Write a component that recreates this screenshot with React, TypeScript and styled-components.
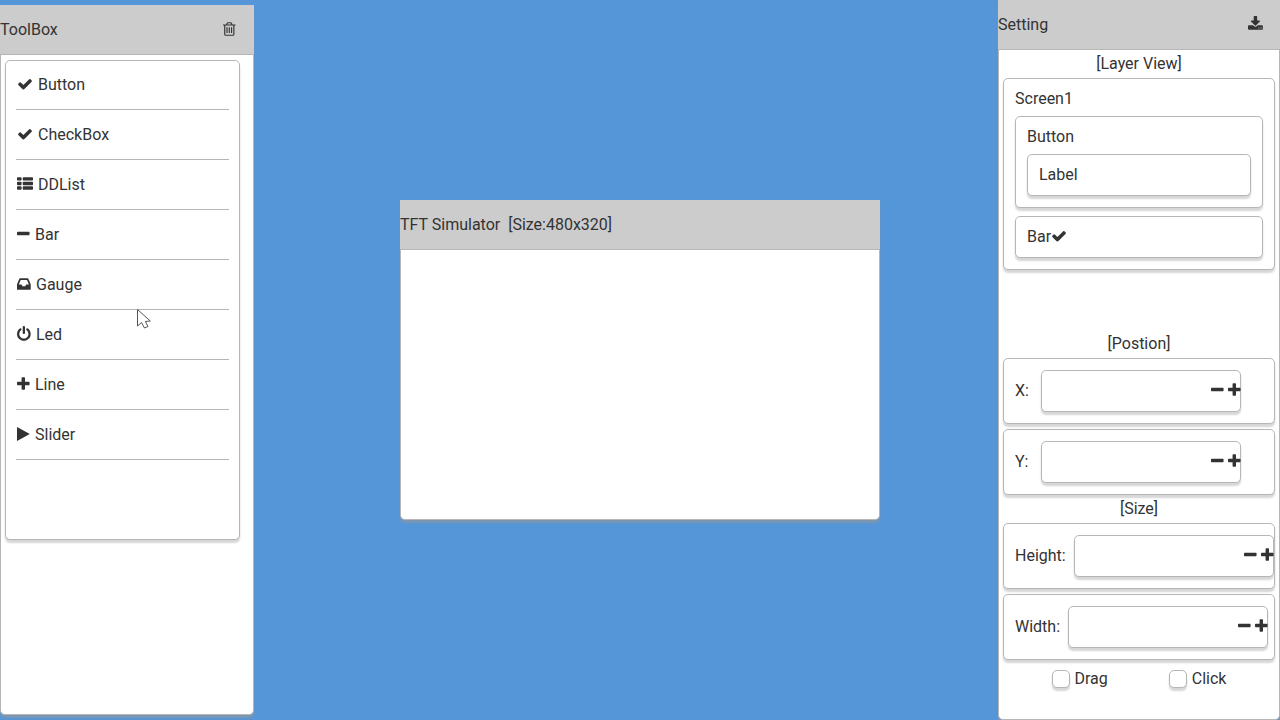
import React, { useId } from "react";
import styled, { createGlobalStyle } from "styled-components";

const GlobalStyle = createGlobalStyle`
  *, *::before, *::after { box-sizing: border-box; }
  body {
    margin: 0;
    background: #5596d8;
    color: #333;
    font: 16px/19px Roboto, "Liberation Sans", sans-serif;
  }
  button, input { font: inherit; color: inherit; }
`;

/* ---------- icons ---------- */

type IconName =
  | "check" | "list" | "minus" | "plus" | "inbox"
  | "power" | "play" | "trash" | "download";

/* x: left edge of the glyph on its 1792-unit grid, w: advance in pixels */
const glyphs: Record<IconName, { x: number; w: number; d: string }> = {
  check: {
    x: 0, w: 16,
    d: "M1671 566q0 40-28 68l-724 724-136 136q-28 28-68 28t-68-28l-136-136-362-362q-28-28-28-68t28-68l136-136q28-28 68-28t68 28l294 295 656-657q28-28 68-28t68 28l136 136q28 28 28 68z",
  },
  list: {
    x: 0, w: 16,
    d: "M512 1248v192q0 40-28 68t-68 28h-320q-40 0-68-28t-28-68v-192q0-40 28-68t68-28h320q40 0 68 28t28 68zm0-512v192q0 40-28 68t-68 28h-320q-40 0-68-28t-28-68v-192q0-40 28-68t68-28h320q40 0 68 28t28 68zm1280 512v192q0 40-28 68t-68 28h-960q-40 0-68-28t-28-68v-192q0-40 28-68t68-28h960q40 0 68 28t28 68zm-1280-1024v192q0 40-28 68t-68 28h-320q-40 0-68-28t-28-68v-192q0-40 28-68t68-28h320q40 0 68 28t28 68zm1280 512v192q0 40-28 68t-68 28h-960q-40 0-68-28t-28-68v-192q0-40 28-68t68-28h960q40 0 68 28t28 68zm0-512v192q0 40-28 68t-68 28h-960q-40 0-68-28t-28-68v-192q0-40 28-68t68-28h960q40 0 68 28t28 68z",
  },
  minus: {
    x: 192, w: 13,
    d: "M1600 736v192q0 40-28 68t-68 28h-1216q-40 0-68-28t-28-68v-192q0-40 28-68t68-28h1216q40 0 68 28t28 68z",
  },
  plus: {
    x: 192, w: 13,
    d: "M1600 736v192q0 40-28 68t-68 28h-416v416q0 40-28 68t-68 28h-192q-40 0-68-28t-28-68v-416h-416q-40 0-68-28t-28-68v-192q0-40 28-68t68-28h416v-416q0-40 28-68t68-28h192q40 0 68 28t28 68v416h416q40 0 68 28t28 68z",
  },
  inbox: {
    x: 128, w: 14,
    d: "M1151 960h316q-1-3-2.5-8.5t-2.5-7.5l-212-496h-708l-212 496q-1 3-2.5 8.5t-2.5 7.5h316l95 192h320zm513 30v482q0 26-19 45t-45 19h-1408q-26 0-45-19t-19-45v-482q0-62 25-123l238-552q10-25 36.5-42t52.5-17h832q26 0 52.5 17t36.5 42l238 552q25 61 25 123z",
  },
  power: {
    x: 128, w: 14,
    d: "M1664 896q0 156-61 298t-164 245-245 164-298 61-298-61-245-164-164-245-61-298q0-182 80.5-343t226.5-270q43-32 95.5-25t83.5 50q32 42 24.5 94.5t-49.5 84.5q-98 74-151.5 181t-53.5 228q0 104 40.5 198.5t109.5 163.5 163.5 109.5 198.5 40.5 198.5-40.5 163.5-109.5 109.5-163.5 40.5-198.5q0-121-53.5-228t-151.5-181q-42-32-49.5-84.5t24.5-94.5q31-43 84-50t95 25q146 109 226.5 270t80.5 343zm-640-768v640q0 52-38 90t-90 38-90-38-38-90v-640q0-52 38-90t90-38 90 38 38 90z",
  },
  play: {
    x: 192, w: 13,
    d: "M1576 927l-1328 738q-23 13-39.5 3t-16.5-36v-1472q0-26 16.5-36t39.5 3l1328 738q23 13 23 31t-23 31z",
  },
  trash: {
    x: 192, w: 14,
    d: "M704 736v576q0 14-9 23t-23 9h-64q-14 0-23-9t-9-23v-576q0-14 9-23t23-9h64q14 0 23 9t9 23zm256 0v576q0 14-9 23t-23 9h-64q-14 0-23-9t-9-23v-576q0-14 9-23t23-9h64q14 0 23 9t9 23zm256 0v576q0 14-9 23t-23 9h-64q-14 0-23-9t-9-23v-576q0-14 9-23t23-9h64q14 0 23 9t9 23zm128 724v-948h-896v948q0 22 7 40.5t14.5 27 10.5 8.5h832q3 0 10.5-8.5t14.5-27 7-40.5zm-672-1076h448l-48-117q-7-9-17-11h-317q-10 2-17 11zm928 32v64q0 14-9 23t-23 9h-96v948q0 83-47 143.5t-113 60.5h-832q-66 0-113-58.5t-47-141.5v-952h-96q-14 0-23-9t-9-23v-64q0-14 9-23t23-9h309l70-167q15-37 54-63t79-26h320q40 0 79 26t54 63l70 167h309q14 0 23 9t9 23z",
  },
  download: {
    x: 64, w: 15,
    d: "M1344 1344q0-26-19-45t-45-19-45 19-19 45 19 45 45 19 45-19 19-45zm256 0q0-26-19-45t-45-19-45 19-19 45 19 45 45 19 45-19 19-45zm128-224v320q0 40-28 68t-68 28h-1472q-40 0-68-28t-28-68v-320q0-40 28-68t68-28h465l135 136q58 56 136 56t136-56l136-136h464q40 0 68 28t28 68zm-325-569q17 41-14 70l-448 448q-18 19-45 19t-45-19l-448-448q-31-29-14-70 17-39 59-39h256v-448q0-26 19-45t45-19h256q26 0 45 19t19 45v448h256q42 0 59 39z",
  },
};

const Glyph = styled.svg`
  display: block;
  flex: none;
  overflow: visible;
  fill: currentColor;
`;

function Icon({ name }: { name: IconName }) {
  const { x, w, d } = glyphs[name];
  return (
    <Glyph width={w} height={17} viewBox={`${x} 0 ${w * 112} ${17 * 112}`} aria-hidden="true">
      <path d={d} />
    </Glyph>
  );
}

/* ---------- shared parts ---------- */

const Desktop = styled.div`
  display: grid;
  grid-template-columns: minmax(254px, 1fr) auto minmax(282px, 1fr);
  min-height: 100vh;
`;

const Window = styled.section`
  display: flex;
  flex-direction: column;
  border-radius: 0 0 5px 5px;
  box-shadow: 0 3px 2px rgba(150, 150, 150, 0.6);
`;

const ToolWindow = styled(Window).attrs({ as: "aside" })`
  position: relative;
  width: 254px;
  margin: 5px 0;
`;

const SimulatorWindow = styled(Window).attrs({ as: "main" })`
  align-self: center;
  width: 480px;
  height: 320px;
`;

const SettingWindow = styled(Window).attrs({ as: "aside" })`
  justify-self: end;
  width: 282px;
`;

const Header = styled.header`
  display: flex;
  align-items: center;
  justify-content: space-between;
  height: 50px;
  padding-right: 17px;
  background: #ccc;
  border-bottom: 1px solid #b6b6b6;
`;

const Title = styled.h1`
  margin: 0;
  font-size: 16px;
  font-weight: 400;
  white-space: pre;
`;

const Body = styled.div`
  flex: 1;
  padding: 0 4px;
  background: #fff;
  border: solid #b6b6b6;
  border-width: 0 1px 1px;
  border-radius: 0 0 5px 5px;
`;

const IconButton = styled.button`
  padding: 0;
  border: 0;
  background: none;
  cursor: pointer;
`;

const card = `
  background: #fff;
  border: 1px solid #b6b6b6;
  border-radius: 5px;
  box-shadow: 0 3px 2px #d6d6d6;
`;

/* ---------- toolbox ---------- */

const ToolList = styled.ul`
  ${card}
  width: 235px;
  height: 480px;
  margin: 5px 0 0;
  padding: 0 10px;
  list-style: none;
`;

const ToolRow = styled.li`
  display: flex;
  align-items: flex-end;
  height: 50px;
  border-bottom: 1px solid #b6b6b6;
  &:first-child { height: 49px; }
`;

const ToolButton = styled(IconButton)`
  display: flex;
  align-items: center;
  gap: 5px;
  width: 100%;
  height: 48px;
  padding: 0 0 1px 1px;
`;

const Pointer = styled.svg`
  position: absolute;
  left: 137px;
  top: 303px;
  pointer-events: none;
`;

const tools: { icon: IconName; name: string }[] = [
  { icon: "check", name: "Button" },
  { icon: "check", name: "CheckBox" },
  { icon: "list", name: "DDList" },
  { icon: "minus", name: "Bar" },
  { icon: "inbox", name: "Gauge" },
  { icon: "power", name: "Led" },
  { icon: "plus", name: "Line" },
  { icon: "play", name: "Slider" },
];

/* ---------- settings ---------- */

const Caption = styled.h2`
  display: flex;
  align-items: center;
  justify-content: center;
  height: 28px;
  margin: 0;
  padding-bottom: 1px;
  font-size: 16px;
  font-weight: 400;
`;

const LayerView = styled.div`
  min-height: 252px;
`;

const Layer = styled.div`
  ${card}
  display: flex;
  flex-direction: column;
  gap: 8px;
  padding: 10px 11px 11px;
`;

const LayerName = styled.span`
  display: flex;
  align-items: center;
`;

const FieldStack = styled.div`
  display: grid;
  gap: 5px;
`;

const FieldCard = styled.div`
  ${card}
  display: flex;
  align-items: center;
  gap: 8px;
  height: 66px;
  padding-left: 11px;
`;

const FieldLabel = styled.label`
  min-width: 18px;
  padding-bottom: 1px;
`;

const Spinner = styled.div`
  ${card}
  display: flex;
  flex: none;
  align-items: center;
  gap: 4px;
  width: 200px;
  height: 42px;
  padding-bottom: 1px;
`;

const NumberInput = styled.input`
  flex: 1;
  min-width: 0;
  height: 39px;
  padding: 0 8px;
  border: 0;
  border-radius: 5px;
  background: none;
  outline: none;
`;

const StepButton = styled(IconButton)`
  &:last-child { margin-right: -1px; }
`;

const Checks = styled.div`
  display: flex;
  justify-content: center;
  gap: 61px;
  padding: 10px 0 31px;
`;

const CheckLabel = styled.label`
  display: flex;
  align-items: flex-end;
  gap: 5px;
  height: 18px;
`;

const CheckInput = styled.input`
  ${card}
  appearance: none;
  width: 18px;
  height: 18px;
  margin: 0;
  &:checked { background: #5596d8; }
`;

function NumberField({ label }: { label: string }) {
  const id = useId();
  return (
    <FieldCard>
      <FieldLabel htmlFor={id}>{label}:</FieldLabel>
      <Spinner>
        <NumberInput id={id} type="text" inputMode="numeric" />
        <StepButton type="button" aria-label={`Decrease ${label}`}>
          <Icon name="minus" />
        </StepButton>
        <StepButton type="button" aria-label={`Increase ${label}`}>
          <Icon name="plus" />
        </StepButton>
      </Spinner>
    </FieldCard>
  );
}

export default function App() {
  return (
    <>
      <GlobalStyle />
      <Desktop>
        <ToolWindow>
          <Header>
            <Title>ToolBox</Title>
            <IconButton type="button" aria-label="Delete">
              <Icon name="trash" />
            </IconButton>
          </Header>
          <Body>
            <ToolList>
              {tools.map((tool) => (
                <ToolRow key={tool.name}>
                  <ToolButton type="button">
                    <Icon name={tool.icon} />
                    {tool.name}
                  </ToolButton>
                </ToolRow>
              ))}
            </ToolList>
          </Body>
          <Pointer width="15" height="22" viewBox="0 0 15 22" aria-hidden="true">
            <path
              d="M.5 1.500v16.500l4-3.500 3 5.500 3.500-1.500-2.700-5 5-.5z"
              fill="#fff"
              stroke="#555"
            />
          </Pointer>
        </ToolWindow>

        <SimulatorWindow>
          <Header>
            <Title>{"TFT Simulator  [Size:480x320]"}</Title>
          </Header>
          <Body />
        </SimulatorWindow>

        <SettingWindow>
          <Header>
            <Title>Setting</Title>
            <IconButton type="button" aria-label="Download">
              <Icon name="download" />
            </IconButton>
          </Header>
          <Body>
            <Caption>[Layer View]</Caption>
            <LayerView>
              <Layer>
                <LayerName>Screen1</LayerName>
                <Layer>
                  <LayerName>Button</LayerName>
                  <Layer>
                    <LayerName>Label</LayerName>
                  </Layer>
                </Layer>
                <Layer>
                  <LayerName>
                    Bar
                    <Icon name="check" />
                  </LayerName>
                </Layer>
              </Layer>
            </LayerView>
            <Caption>[Postion]</Caption>
            <FieldStack>
              <NumberField label="X" />
              <NumberField label="Y" />
            </FieldStack>
            <Caption>[Size]</Caption>
            <FieldStack>
              <NumberField label="Height" />
              <NumberField label="Width" />
            </FieldStack>
            <Checks>
              <CheckLabel>
                <CheckInput type="checkbox" />
                Drag
              </CheckLabel>
              <CheckLabel>
                <CheckInput type="checkbox" />
                Click
              </CheckLabel>
            </Checks>
          </Body>
        </SettingWindow>
      </Desktop>
    </>
  );
}
